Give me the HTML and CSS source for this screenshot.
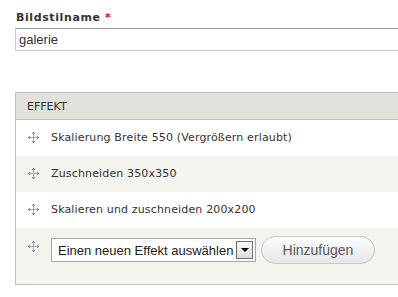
FILE: index.html
```html
<!DOCTYPE html>
<html lang="de">

<head>
    <meta charset="UTF-8">
    <title>Bildstil bearbeiten</title>
    <link rel="stylesheet" href="styles.css">
</head>

<body>
    <div class="page">
        <div class="form-item">
            <label for="edit-name">Bildstilname <span class="required">*</span></label>
            <input type="text" id="edit-name" class="form-text" value="galerie">
        </div>

        <table class="effects">
            <thead>
                <tr>
                    <th>EFFEKT</th>
                </tr>
            </thead>
            <tbody>
                <tr class="odd">
                    <td><span class="drag"></span>Skalierung Breite 550 (Vergrößern erlaubt)</td>
                </tr>
                <tr class="even">
                    <td><span class="drag"></span>Zuschneiden 350x350</td>
                </tr>
                <tr class="odd">
                    <td><span class="drag"></span>Skalieren und zuschneiden 200x200</td>
                </tr>
                <tr class="even new-row">
                    <td>
                        <div class="new-effect">
                            <span class="drag"></span>
                            <div class="select">
                                <span class="select-text">Einen neuen Effekt auswählen</span>
                                <span class="select-arrow"></span>
                            </div>
                            <button type="button" class="button">Hinzufügen</button>
                        </div>
                    </td>
                </tr>
            </tbody>
        </table>
    </div>
</body>

</html>
```

FILE: styles.css
```css
* {
    margin: 0;
    padding: 0;
    box-sizing: border-box;
}

body {
    background: #fff;
    color: #333;
    font-family: "DejaVu Sans", Verdana, sans-serif;
    font-size: 11px;
    overflow: hidden;
}

.page {
    width: 440px;
    padding: 11px 0 0 15px;
}

.form-item label {
    display: block;
    font-weight: bold;
    font-size: 11px;
    line-height: 14px;
    color: #333;
    margin-left: 1px;
    margin-bottom: 3px;
    letter-spacing: 0.6px;
}

.required {
    color: #e00;
}

.form-text {
    display: block;
    width: 100%;
    height: 23px;
    padding: 0 3px;
    border: 1px solid #ccc;
    border-top-color: #999;
    font-family: "Liberation Sans", Arial, sans-serif;
    font-size: 13px;
    color: #333;
}

.effects {
    margin-top: 41px;
    width: 100%;
    border-collapse: collapse;
    border: 1px solid #bebfb9;
}

.effects th {
    background: #e1e2dc;
    border-bottom: 1px solid #bebfb9;
    height: 27px;
    padding: 0 11px;
    text-align: left;
    font-weight: normal;
    font-size: 11px;
    color: #333;
}

.effects td {
    height: 36px;
    padding: 0 11px;
    font-size: 11px;
    color: #333;
    letter-spacing: 0.15px;
}

.odd {
    background: #fff;
}

.even {
    background: #f3f4ee;
}

.drag {
    display: inline-block;
    width: 11px;
    height: 11px;
    margin: 0 12px 0 1px;
    vertical-align: -2px;
    background:
        linear-gradient(#aaa, #aaa) 5px 1px / 1px 9px no-repeat,
        linear-gradient(#aaa, #aaa) 1px 5px / 9px 1px no-repeat,
        linear-gradient(#888, #888) 4px 1px / 3px 1px no-repeat,
        linear-gradient(#888, #888) 4px 9px / 3px 1px no-repeat,
        linear-gradient(#888, #888) 1px 4px / 1px 3px no-repeat,
        linear-gradient(#888, #888) 9px 4px / 1px 3px no-repeat,
        linear-gradient(#666, #666) 5px 0 / 1px 1px no-repeat,
        linear-gradient(#666, #666) 5px 10px / 1px 1px no-repeat,
        linear-gradient(#666, #666) 0 5px / 1px 1px no-repeat,
        linear-gradient(#666, #666) 10px 5px / 1px 1px no-repeat;
}

.new-row td {
    height: 56px;
    padding-top: 8px;
    padding-bottom: 20px;
    vertical-align: top;
    letter-spacing: 0;
}

.new-effect {
    display: flex;
    align-items: center;
}

.new-effect .drag {
    margin-right: 12px;
    align-self: flex-start;
    margin-top: 5px;
}

.select {
    display: flex;
    align-items: center;
    width: 205px;
    height: 24px;
    margin-top: 1px;
    border: 1px solid #a5a5a5;
    background: #fff;
    padding: 0 2px 0 6px;
}

.select-text {
    flex: 1;
    font-family: "Liberation Sans", Arial, sans-serif;
    font-size: 13px;
    color: #222;
}

.select-arrow {
    position: relative;
    width: 17px;
    height: 18px;
    border: 1px solid #6f6f6f;
    background: linear-gradient(#fafafa, #dcdcdc);
}

.select-arrow::after {
    content: "";
    position: absolute;
    left: 4px;
    top: 6px;
    border-left: 4px solid transparent;
    border-right: 4px solid transparent;
    border-top: 4px solid #000;
}

.button {
    margin-left: 5px;
    width: 114px;
    height: 28px;
    border: 1px solid #c8c8c8;
    border-radius: 14px;
    background: linear-gradient(#fdfdfd, #e6e6e6);
    font-family: "Liberation Sans", Arial, sans-serif;
    font-size: 14px;
    color: #5a5a5a;
    cursor: pointer;
}
```
